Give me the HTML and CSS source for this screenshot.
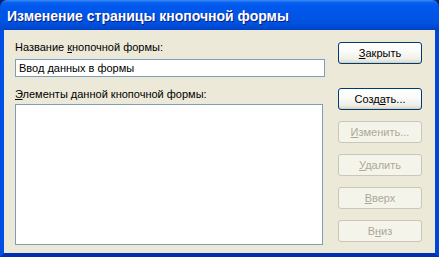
FILE: index.html
```html
<!DOCTYPE html>
<html>
<head>
<meta charset="utf-8">
<link rel="stylesheet" href="styles.css">
</head>
<body>
<div class="window">
  <div class="titlebar"><span class="title">Изменение страницы кнопочной формы</span></div>
  <div class="frame">
    <div class="client">
      <div class="left">
        <div class="label">Название <u>к</u>нопочной формы:</div>
        <div class="input">Ввод данных в формы</div>
        <div class="label label2"><u>Э</u>лементы данной кнопочной формы:</div>
        <div class="list"></div>
      </div>
      <div class="buttons">
        <div class="btn btn-close"><span><u>З</u>акрыть</span></div>
        <div class="btn"><span>Созд<u>а</u>ть...</span></div>
        <div class="btn disabled"><span><u>И</u>зменить...</span></div>
        <div class="btn disabled"><span><u>У</u>далить</span></div>
        <div class="btn disabled"><span><u>В</u>верх</span></div>
        <div class="btn disabled"><span>В<u>н</u>из</span></div>
      </div>
    </div>
  </div>
</div>
</body>
</html>
```
FILE: styles.css
```css
html, body {
  margin: 0;
  padding: 0;
  background: #0a246a;
}
.window {
  width: 439px;
  height: 257px;
  display: flex;
  flex-direction: column;
  font-family: "Liberation Sans", Arial, sans-serif;
  font-size: 11px;
  color: #000;
}
.titlebar {
  height: 30px;
  flex: none;
  border-radius: 7px 7px 0 0;
  background: linear-gradient(to bottom, #3d8dfa 0%, #0a62ec 8%, #0058ee 20%, #0055e8 50%, #0052e0 75%, #0049d4 92%, #0040c0 100%);
  display: flex;
  align-items: center;
  padding: 2px 0 0 7px;
  box-sizing: border-box;
}
.title {
  color: #fff;
  font-family: "Liberation Sans", Arial, sans-serif;
  font-weight: bold;
  font-size: 14px;
  text-shadow: 1px 1px 0 #0a1e80;
}
.frame {
  flex: 1;
  display: flex;
  background: #0047d8;
  border-left: 4px solid #0050e6;
  border-right: 4px solid #0046d6;
  border-bottom: 4px solid #0030b0;
  box-sizing: border-box;
}
.client {
  flex: 1;
  background: #ece9d8;
  display: flex;
  padding: 10px 13px 0 11px;
  gap: 13px;
}
.left {
  width: 310px;
  display: flex;
  flex-direction: column;
}
.label {
  height: 14px;
  line-height: 14px;
}
.label u, .btn u {
  text-decoration: underline;
  text-underline-offset: 1px;
}
.input {
  margin-top: 5px;
  height: 18px;
  box-sizing: border-box;
  border: 1px solid #7f9db9;
  background: #fff;
  padding-left: 3px;
  line-height: 16px;
}
.label2 {
  margin-top: 10px;
}
.list {
  margin-top: 3px;
  width: 308px;
  height: 141px;
  box-sizing: border-box;
  border: 1px solid #7f9db9;
  background: #fff;
}
.buttons {
  width: 84px;
  display: flex;
  flex-direction: column;
  gap: 11px;
  padding-top: 2px;
}
.btn {
  height: 22px;
  box-sizing: border-box;
  border: 1px solid #003c74;
  border-radius: 3px;
  background: linear-gradient(to bottom, #ffffff 0%, #fbfbf9 40%, #f0efe8 80%, #dcd8c9 100%);
  display: flex;
  align-items: center;
  justify-content: center;
  box-shadow: inset 0 -1px 0 #d6d0c0;
}
.btn-close {
  margin-bottom: 13px;
}
.btn.disabled {
  border-color: #c9c7ba;
  background: #f5f4ea;
  color: #aca899;
  box-shadow: none;
}
```
